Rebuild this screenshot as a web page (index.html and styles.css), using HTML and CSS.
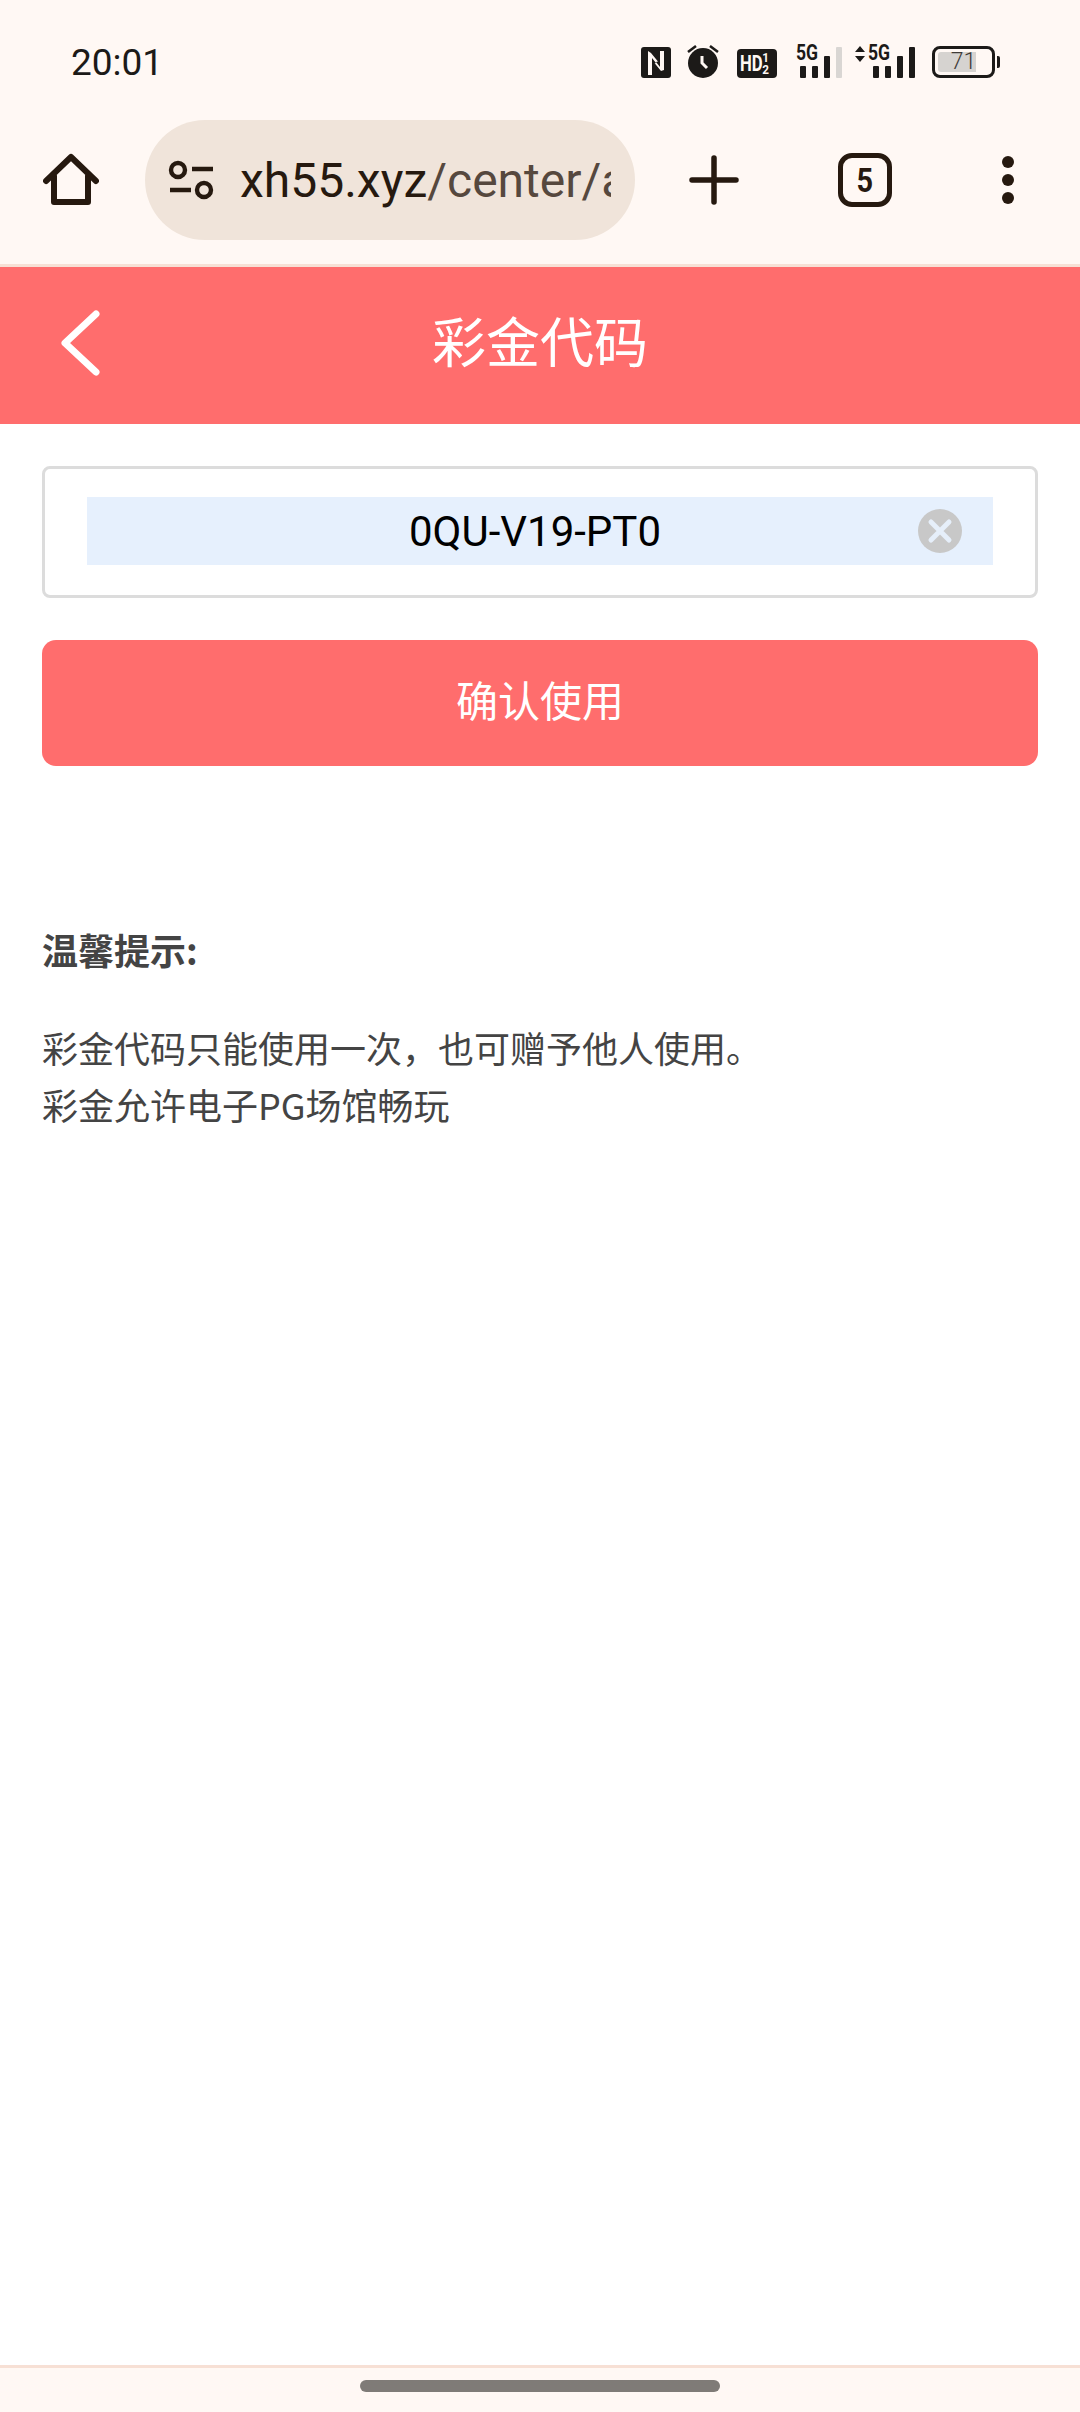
FILE: index.html
```html
<!DOCTYPE html>
<html lang="zh-cn">
<head>
    <meta charset="UTF-8">
    <title>彩金代码</title>
    <link rel="stylesheet" href="styles.css">
</head>
<body>
    <div class="page">
        <div class="status-bar">
            <span class="time">20:01</span>
            <div class="status-icons">
                <svg class="ic-nfc" width="30" height="31" viewBox="0 0 30 31">
                    <rect width="30" height="31" rx="3" fill="#1c1a18"/>
                    <path d="M7 4v24h4V13l9 11 3-1V4h-4v13l-9-11z" fill="#fff8f4"/>
                    <path d="M11 11l4 5-4 1zM19 20l-4-5 4-1z" fill="#1c1a18"/>
                </svg>
                <svg class="ic-alarm" width="32" height="34" viewBox="0 0 32 34">
                    <circle cx="16" cy="19" r="15" fill="#1c1a18"/>
                    <path d="M1 8l8-6M31 8l-8-6" stroke="#1c1a18" stroke-width="2.6" fill="none"/>
                    <path d="M15 12v7l5 5" stroke="#fff8f4" stroke-width="3" fill="none"/>
                </svg>
                <div class="ic-hd"><span class="hd-label">HD</span><span class="hd-sims"><i>1</i><i>2</i></span></div>
                <div class="ic-signal">
                    <span class="net-label">5G</span>
                    <div class="bars">
                        <i class="b1"></i><i class="b2"></i><i class="b3"></i><i class="b4 off"></i>
                    </div>
                </div>
                <div class="ic-signal second">
                    <svg class="updown" width="10" height="16" viewBox="0 0 10 16">
                        <path d="M5 0l5 6H0zM5 16L0 10h10z" fill="#1c1a18"/>
                    </svg>
                    <span class="net-label">5G</span>
                    <div class="bars">
                        <i class="b1"></i><i class="b2"></i><i class="b3"></i><i class="b4"></i>
                    </div>
                </div>
                <div class="battery">
                    <div class="battery-body">
                        <div class="battery-fill"></div>
                        <span class="battery-num">71</span>
                    </div>
                    <div class="battery-cap"></div>
                </div>
            </div>
        </div>

        <div class="toolbar">
            <div class="tool home">
                <svg width="56" height="56" viewBox="0 0 56 56">
                    <path d="M3 29L28 5l25 24M11 24v26h34V24" fill="none" stroke="#26190f" stroke-width="6" stroke-linecap="round" stroke-linejoin="round"/>
                </svg>
            </div>
            <div class="url-pill">
                <svg class="tune" width="46" height="40" viewBox="0 0 46 40">
                    <circle cx="10" cy="10" r="7" fill="none" stroke="#26190f" stroke-width="4.4"/>
                    <path d="M24 9h21M2 30h21" stroke="#26190f" stroke-width="4.4"/>
                    <circle cx="36" cy="30" r="7" fill="none" stroke="#26190f" stroke-width="4.4"/>
                </svg>
                <div class="url-text"><span class="domain">xh55.xyz</span>/center/a</div>
            </div>
            <div class="tool plus">
                <svg width="50" height="50" viewBox="0 0 50 50">
                    <path d="M25 3v44M3 25h44" stroke="#26190f" stroke-width="5.5" stroke-linecap="round"/>
                </svg>
            </div>
            <div class="tool tabs">
                <div class="tab-count"><span>5</span></div>
            </div>
            <div class="tool more">
                <i></i><i></i><i></i>
            </div>
        </div>

        <div class="header">
            <div class="back">
                <svg width="40" height="66" viewBox="0 0 40 66">
                    <path d="M36 4L5 33l31 29" fill="none" stroke="#fff" stroke-width="7" stroke-linecap="round" stroke-linejoin="round"/>
                </svg>
            </div>
            <h1>彩金代码</h1>
        </div>

        <div class="content">
            <div class="code-field">
                <div class="code-input">
                    <span class="code-value">0QU-V19-PT0</span>
                    <svg class="clear" width="44" height="44" viewBox="0 0 44 44">
                        <circle cx="22" cy="22" r="22" fill="#c8c8c8"/>
                        <path d="M13 13l18 18M31 13L13 31" stroke="#e6effa" stroke-width="5" stroke-linecap="round"/>
                    </svg>
                </div>
            </div>
            <button class="confirm-btn">确认使用</button>

            <div class="tips">
                <p class="tips-title">温馨提示:</p>
                <p class="tips-body">彩金代码只能使用一次，也可赠予他人使用。<br>彩金允许电子PG场馆畅玩</p>
            </div>
        </div>

        <div class="nav-bar">
            <div class="nav-handle"></div>
        </div>
    </div>
</body>
</html>
```

FILE: styles.css
```css
* {
    box-sizing: border-box;
}
html, body {
    margin: 0;
    padding: 0;
}
body {
    font-family: Roboto, "Noto Sans CJK SC", sans-serif;
    background-color: #fff;
}
.page {
    width: 1080px;
    height: 2412px;
    display: flex;
    flex-direction: column;
    overflow: hidden;
}

/* status bar */
.status-bar {
    height: 120px;
    padding: 45px 0 0 71px;
    background-color: #fff8f4;
    display: flex;
    align-items: flex-start;
    justify-content: space-between;
}
.time {
    font-size: 37px;
    line-height: 36px;
    color: #1c1a18;
}
.status-icons {
    display: flex;
    align-items: flex-start;
    margin-top: 2px;
    padding-right: 80px;
}
.ic-alarm {
    margin-left: 16px;
    margin-top: -3px;
}
.ic-hd {
    margin-left: 18px;
    width: 40px;
    height: 29px;
    margin-top: 2px;
    background-color: #1c1a18;
    border-radius: 4px;
    color: #fff8f4;
    display: flex;
    align-items: center;
    padding-left: 3px;
    font-weight: 700;
}
.hd-label {
    font-size: 22px;
    width: 22px;
    transform: scaleX(0.76);
    transform-origin: left center;
}
.hd-sims {
    display: flex;
    flex-direction: column;
    font-size: 13px;
    line-height: 12px;
    transform: scaleX(0.9);
}
.hd-sims i {
    font-style: normal;
}
.ic-signal {
    position: relative;
    margin-left: 19px;
    width: 46px;
    height: 31px;
}
.ic-signal.second {
    margin-left: 13px;
    width: 60px;
}
.net-label {
    position: absolute;
    left: 0;
    top: -4px;
    font-size: 22px;
    line-height: 20px;
    font-weight: 700;
    color: #1c1a18;
    transform: scaleX(0.8);
    transform-origin: left center;
}
.second .net-label {
    left: 13px;
}
.updown {
    position: absolute;
    left: 0;
    top: -1px;
}
.bars {
    position: absolute;
    right: 0;
    bottom: 0;
    display: flex;
    align-items: flex-end;
    gap: 6px;
}
.bars i {
    display: block;
    width: 6px;
    background-color: #1c1a18;
    border-radius: 1px;
}
.bars .b1 { height: 12px; }
.bars .b2 { height: 12px; }
.bars .b3 { height: 22px; }
.bars .b4 { height: 31px; }
.bars .off { background-color: #d9d6d3; }
.battery {
    margin-left: 17px;
    display: flex;
    align-items: center;
    margin-top: -1px;
}
.battery-body {
    position: relative;
    width: 63px;
    height: 32px;
    border: 3px solid #1c1a18;
    border-radius: 8px;
    padding: 3px;
}
.battery-fill {
    width: 38px;
    height: 100%;
    background-color: #d6d3d0;
    border-radius: 3px 0 0 3px;
}
.battery-num {
    position: absolute;
    left: 0;
    right: 0;
    top: 0;
    text-align: center;
    font-size: 23px;
    font-weight: 300;
    line-height: 26px;
    color: #3f3b38;
}
.battery-cap {
    width: 3px;
    height: 12px;
    margin-left: 2px;
    background-color: #1c1a18;
    border-radius: 0 2px 2px 0;
}

/* browser toolbar */
.toolbar {
    height: 147px;
    padding-bottom: 24px;
    background-color: #fff8f4;
    border-bottom: 3px solid #f7e0d5;
    display: flex;
    align-items: center;
}
.tool {
    display: flex;
    align-items: center;
    justify-content: center;
}
.home { width: 142px; }
.plus { width: 158px; }
.tabs { width: 144px; }
.more {
    width: 141px;
    flex-direction: column;
    gap: 6px;
}
.more i {
    display: block;
    width: 12px;
    height: 12px;
    border-radius: 50%;
    background-color: #26190f;
}
.tab-count {
    width: 54px;
    height: 54px;
    border: 5px solid #26190f;
    border-radius: 14px;
    display: flex;
    align-items: center;
    justify-content: center;
    font-size: 34px;
    font-weight: 700;
    color: #26190f;
}
.tab-count span {
    transform: scaleX(0.85);
}
.url-pill {
    width: 490px;
    height: 120px;
    margin-left: 3px;
    padding: 0 24px 0 23px;
    background-color: #f0e4da;
    border-radius: 60px;
    display: flex;
    align-items: center;
    gap: 26px;
    flex-shrink: 0;
}
.tune {
    flex-shrink: 0;
}
.url-text {
    flex: 1;
    overflow: hidden;
    white-space: nowrap;
    font-size: 48px;
    color: #56483e;
}
.domain {
    color: #26190f;
}

/* page header */
.header {
    height: 157px;
    background-color: #ff6d6d;
    display: grid;
    grid-template-columns: 140px 1fr 140px;
    align-items: center;
}
.back {
    padding: 0 0 5px 60px;
    display: flex;
    align-items: center;
}
.header h1 {
    margin: 0 0 12px;
    text-align: center;
    font-size: 54px;
    font-weight: 400;
    color: #fff;
    font-family: "Noto Sans CJK SC", sans-serif;
}

/* code form */
.content {
    flex: 1;
    padding: 42px 42px 0;
}
.code-field {
    height: 132px;
    padding: 28px 42px;
    border: 3px solid #dcdcdc;
    border-radius: 8px;
}
.code-input {
    position: relative;
    height: 68px;
    padding-right: 10px;
    background-color: #e6f0fd;
    display: flex;
    align-items: center;
    justify-content: center;
}
.code-value {
    font-size: 42px;
    color: #000;
}
.clear {
    position: absolute;
    right: 31px;
    top: 12px;
}
.confirm-btn {
    display: block;
    width: 100%;
    height: 126px;
    margin-top: 42px;
    padding: 0 0 9px;
    border: none;
    border-radius: 14px;
    background-color: #ff6d6d;
    color: #fff;
    font-size: 42px;
    font-family: "Noto Sans CJK SC", sans-serif;
}
.tips {
    margin-top: 154px;
    font-family: "Noto Sans CJK SC", sans-serif;
    font-size: 36px;
    line-height: 58px;
    color: #444;
}
.tips p {
    margin: 0;
}
.tips-title {
    font-weight: 700;
}
.tips .tips-body {
    margin-top: 41px;
    line-height: 57px;
}

/* bottom nav */
.nav-bar {
    height: 47px;
    background-color: #fff8f4;
    border-top: 3px solid #f7e0d5;
    display: flex;
    justify-content: center;
    padding-top: 12px;
}
.nav-handle {
    width: 360px;
    height: 12px;
    border-radius: 6px;
    background-color: #7f7b77;
}
```
